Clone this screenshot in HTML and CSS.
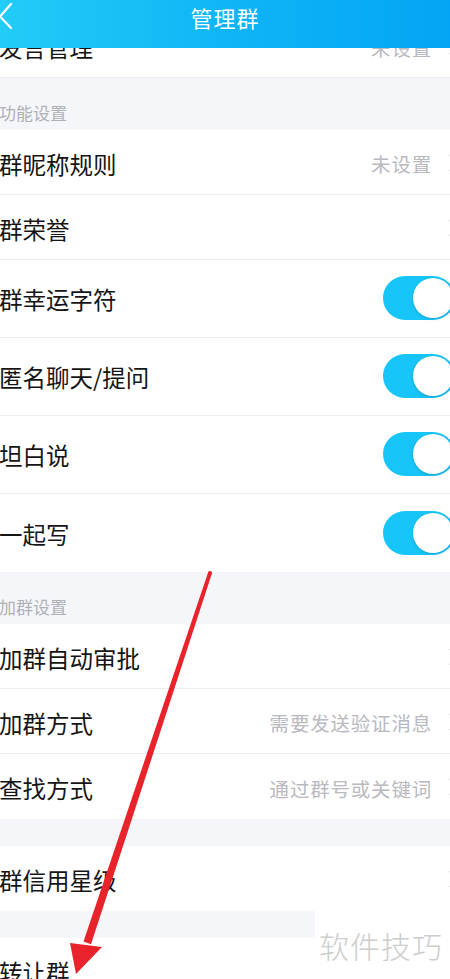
FILE: index.html
```html
<!DOCTYPE html>
<html lang="zh-CN">
<head>
<meta charset="utf-8">
<title>管理群</title>
<link rel="stylesheet" href="styles.css">
</head>
<body>
<div class="page">
  <header class="navbar">
    <svg class="back" width="16" height="30" viewBox="0 0 16 30"><polyline points="12,3 1,15.5 12,27" fill="none" stroke="#fff" stroke-width="2.2" stroke-linecap="round" stroke-linejoin="round"/></svg>
    <h1 class="title">管理群</h1>
  </header>

  <main class="list">
    <div class="row first"><span class="label">发言管理</span><span class="value">未设置</span><svg class="chev" width="10" height="18" viewBox="0 0 10 18"><polyline points="1.5,1.5 8.5,9 1.5,16.5" fill="none" stroke="#c7c7cc" stroke-width="2" stroke-linecap="round" stroke-linejoin="round"/></svg></div>

    <div class="section">功能设置</div>
    <div class="row"><span class="label">群昵称规则</span><span class="value">未设置</span><svg class="chev" width="10" height="18" viewBox="0 0 10 18"><polyline points="1.5,1.5 8.5,9 1.5,16.5" fill="none" stroke="#c7c7cc" stroke-width="2" stroke-linecap="round" stroke-linejoin="round"/></svg></div>
    <div class="row"><span class="label">群荣誉</span><svg class="chev" width="10" height="18" viewBox="0 0 10 18"><polyline points="1.5,1.5 8.5,9 1.5,16.5" fill="none" stroke="#c7c7cc" stroke-width="2" stroke-linecap="round" stroke-linejoin="round"/></svg></div>
    <div class="row tall"><span class="label">群幸运字符</span><span class="switch"><span class="knob"></span></span></div>
    <div class="row tall"><span class="label">匿名聊天/提问</span><span class="switch"><span class="knob"></span></span></div>
    <div class="row tall"><span class="label">坦白说</span><span class="switch"><span class="knob"></span></span></div>
    <div class="row tall last"><span class="label">一起写</span><span class="switch"><span class="knob"></span></span></div>

    <div class="section">加群设置</div>
    <div class="row"><span class="label">加群自动审批</span><svg class="chev" width="10" height="18" viewBox="0 0 10 18"><polyline points="1.5,1.5 8.5,9 1.5,16.5" fill="none" stroke="#c7c7cc" stroke-width="2" stroke-linecap="round" stroke-linejoin="round"/></svg></div>
    <div class="row"><span class="label">加群方式</span><span class="value">需要发送验证消息</span><svg class="chev" width="10" height="18" viewBox="0 0 10 18"><polyline points="1.5,1.5 8.5,9 1.5,16.5" fill="none" stroke="#c7c7cc" stroke-width="2" stroke-linecap="round" stroke-linejoin="round"/></svg></div>
    <div class="row last"><span class="label">查找方式</span><span class="value">通过群号或关键词</span><svg class="chev" width="10" height="18" viewBox="0 0 10 18"><polyline points="1.5,1.5 8.5,9 1.5,16.5" fill="none" stroke="#c7c7cc" stroke-width="2" stroke-linecap="round" stroke-linejoin="round"/></svg></div>

    <div class="gap"></div>
    <div class="row last"><span class="label">群信用星级</span><svg class="chev" width="10" height="18" viewBox="0 0 10 18"><polyline points="1.5,1.5 8.5,9 1.5,16.5" fill="none" stroke="#c7c7cc" stroke-width="2" stroke-linecap="round" stroke-linejoin="round"/></svg></div>

    <div class="gap"></div>
    <div class="row last"><span class="label">转让群</span></div>
  </main>

  <svg class="arrow" width="450" height="979" viewBox="0 0 450 979">
    <polygon points="211.9,573.6 208.1,572.4 83.5,941.5 91,944.3" fill="#e8232b"/>
    <circle cx="210" cy="573" r="2" fill="#e8232b"/>
    <polygon points="70,943 102,947 76,974" fill="#e8232b"/>
  </svg>

  <div class="watermark">软件技巧</div>
</div>
</body>
</html>
```

FILE: styles.css
```css
* { box-sizing: border-box; margin: 0; padding: 0; }

html, body {
  width: 450px;
  height: 979px;
  overflow: hidden;
  background: #f5f6fa;
  font-family: "Noto Sans CJK SC", "Noto Sans", sans-serif;
}

.page {
  position: relative;
  width: 450px;
  height: 979px;
  overflow: hidden;
}

.navbar {
  position: absolute;
  top: 0;
  left: 0;
  right: 0;
  height: 48px;
  z-index: 5;
  background: linear-gradient(90deg, #22ccf7 0%, #0fb5f6 50%, #04a5f4 100%);
  display: flex;
  align-items: center;
  justify-content: center;
}

.back {
  position: absolute;
  left: -1px;
  top: 1px;
}

.title {
  color: #fff;
  font-size: 22px;
  font-weight: 400;
  letter-spacing: 1px;
  line-height: 30px;
  margin-top: -15px;
}

.list {
  padding-top: 14px;
}

.row {
  display: flex;
  align-items: center;
  height: 65px;
  padding-top: 3px;
  background: #fff;
  border-bottom: 1px solid #ececef;
  overflow: hidden;
}

.row.first { height: 64px; }
.row.tall { height: 78px; padding-top: 1px; }
.row.last { border-bottom: none; }

.label {
  flex: 1;
  font-size: 23.5px;
  color: #151515;
  margin-left: -1px;
  white-space: nowrap;
}

.value {
  font-size: 19.5px;
  color: #b9b9bf;
  letter-spacing: 0.8px;
  margin-right: 17px;
  white-space: nowrap;
}

.chev {
  flex-shrink: 0;
  margin-right: -9px;
  margin-top: -2px;
}

.switch {
  flex-shrink: 0;
  position: relative;
  width: 72px;
  height: 44px;
  border-radius: 22px;
  background: #17c5f9;
  margin-right: -5px;
  margin-top: -2px;
}

.knob {
  position: absolute;
  right: 2px;
  top: 2px;
  width: 40px;
  height: 40px;
  border-radius: 50%;
  background: #fff;
  box-shadow: 0 1px 3px rgba(0, 0, 0, 0.18);
}

.section {
  height: 52px;
  padding-top: 24px;
  font-size: 17px;
  line-height: 22px;
  color: #b0b0b8;
  margin-left: -1px;
}

.gap {
  height: 27px;
}

.arrow {
  position: absolute;
  top: 0;
  left: 0;
  z-index: 6;
  pointer-events: none;
}

.watermark {
  position: absolute;
  left: 315px;
  top: 911px;
  width: 135px;
  height: 68px;
  background: #fff;
  color: #cdcdcd;
  font-size: 30px;
  font-weight: 300;
  line-height: 68px;
  padding-left: 4px;
  letter-spacing: 1px;
  z-index: 7;
}
```
